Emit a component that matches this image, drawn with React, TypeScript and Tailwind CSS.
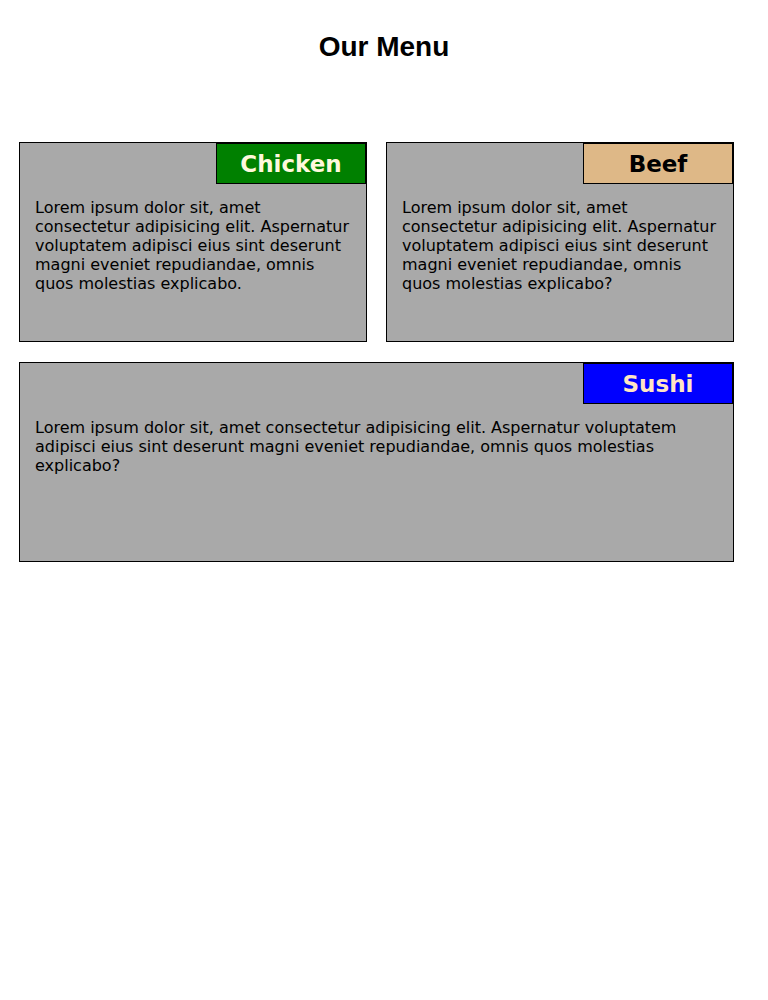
const items = [
  {
    name: 'Chicken',
    label: 'bg-[#008000] text-[#fff8dc]',
    text: 'Lorem ipsum dolor sit, amet consectetur adipisicing elit. Aspernatur voluptatem adipisci eius sint deserunt magni eveniet repudiandae, omnis quos molestias explicabo.',
    wide: false,
  },
  {
    name: 'Beef',
    label: 'bg-[#deb887] text-black',
    text: 'Lorem ipsum dolor sit, amet consectetur adipisicing elit. Aspernatur voluptatem adipisci eius sint deserunt magni eveniet repudiandae, omnis quos molestias explicabo?',
    wide: false,
  },
  {
    name: 'Sushi',
    label: 'bg-[#0000ff] text-[#ffe4c4]',
    text: 'Lorem ipsum dolor sit, amet consectetur adipisicing elit. Aspernatur voluptatem adipisci eius sint deserunt magni eveniet repudiandae, omnis quos molestias explicabo?',
    wide: true,
  },
]

function MenuCard({ name, label, text, wide }: (typeof items)[number]) {
  return (
    <article
      className={`flex flex-col h-[200px] border border-black bg-[#a9a9a9] ${wide ? 'col-span-2' : ''}`}
    >
      <div className="flex justify-end">
        <h2
          className={`w-[150px] h-[41px] pt-[2px] border border-black flex items-center justify-center text-[23px] font-bold ${label}`}
        >
          {name}
        </h2>
      </div>
      <p className="mt-[14px] px-[15px] text-[16px] leading-[19px] text-black">{text}</p>
    </article>
  )
}

export default function App() {
  return (
    <div className="min-h-screen bg-white font-['DejaVu_Sans',sans-serif]">
      {/* Title */}
      <h1 className="pt-[31px] text-center text-[28px] leading-[32px] font-bold font-['Liberation_Sans',Arial,sans-serif]">
        Our Menu
      </h1>

      {/* Cards */}
      <section className="mt-[79px] ml-[19px] w-[715px] grid grid-cols-2 gap-x-[19px] gap-y-[20px]">
        {items.map((item) => (
          <MenuCard key={item.name} {...item} />
        ))}
      </section>
    </div>
  )
}
